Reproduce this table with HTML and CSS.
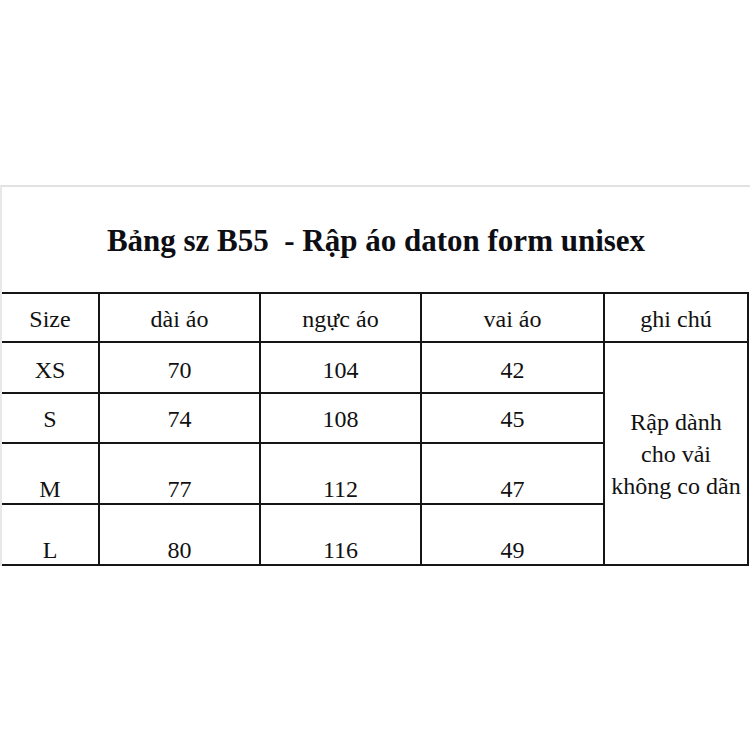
FILE: index.html
```html
<!DOCTYPE html>
<html lang="vi">
<head>
<meta charset="utf-8">
<link rel="stylesheet" href="styles.css">
</head>
<body>
<div class="frame">
  <h1 class="title">Bảng sz B55&nbsp; - Rập áo daton form unisex</h1>
  <table class="sizes">
    <tr class="r-head">
      <td class="c1">Size</td><td class="c2">dài áo</td><td class="c3">ngực áo</td><td class="c4">vai áo</td><td class="c5">ghi chú</td>
    </tr>
    <tr class="r-xs">
      <td>XS</td><td>70</td><td>104</td><td>42</td>
      <td class="note" rowspan="4">Rập dành<br>cho vải<br>không co dãn</td>
    </tr>
    <tr class="r-s"><td>S</td><td>74</td><td>108</td><td>45</td></tr>
    <tr class="r-m"><td>M</td><td>77</td><td>112</td><td>47</td></tr>
    <tr class="r-l"><td>L</td><td>80</td><td>116</td><td>49</td></tr>
  </table>
</div>
</body>
</html>
```
FILE: styles.css
```css
html, body {
  margin: 0;
  padding: 0;
  background: #ffffff;
}
body {
  width: 750px;
  height: 750px;
  overflow: hidden;
  font-family: "Liberation Serif", "Times New Roman", serif;
  color: #111111;
}
.frame {
  margin-top: 185px;
  border-top: 2px solid #e2e2e2;
  border-left: 2px solid #e8e8e8;
  width: 748px;
}
.title {
  margin: 0;
  padding-top: 38px;
  height: 32px;
  line-height: 32px;
  font-size: 31px;
  font-weight: bold;
  text-align: center;
  color: #0d0d14;
}
.sizes {
  margin-top: 35px;
  border-collapse: collapse;
  table-layout: fixed;
  width: 747px;
  font-size: 24px;
}
.sizes td {
  border: 2px solid #151515;
  text-align: center;
  vertical-align: bottom;
  padding: 0;
  line-height: 26px;
  box-sizing: border-box;
}
.sizes tr td:first-child { border-left: none; }
.c1 { width: 97px; }
.c2 { width: 161px; }
.c3 { width: 161px; }
.c4 { width: 183px; }
.c5 { width: 144px; }
.r-head td { height: 49px; padding-bottom: 9px; }
.r-xs td { height: 51px; padding-bottom: 9px; }
.r-s td { height: 50px; padding-bottom: 10px; }
.r-m td { height: 61px; padding-bottom: 1px; }
.r-l td { height: 61px; padding-bottom: 1px; }
.sizes td.note {
  vertical-align: middle;
  padding: 0;
  line-height: 32px;
}
```
